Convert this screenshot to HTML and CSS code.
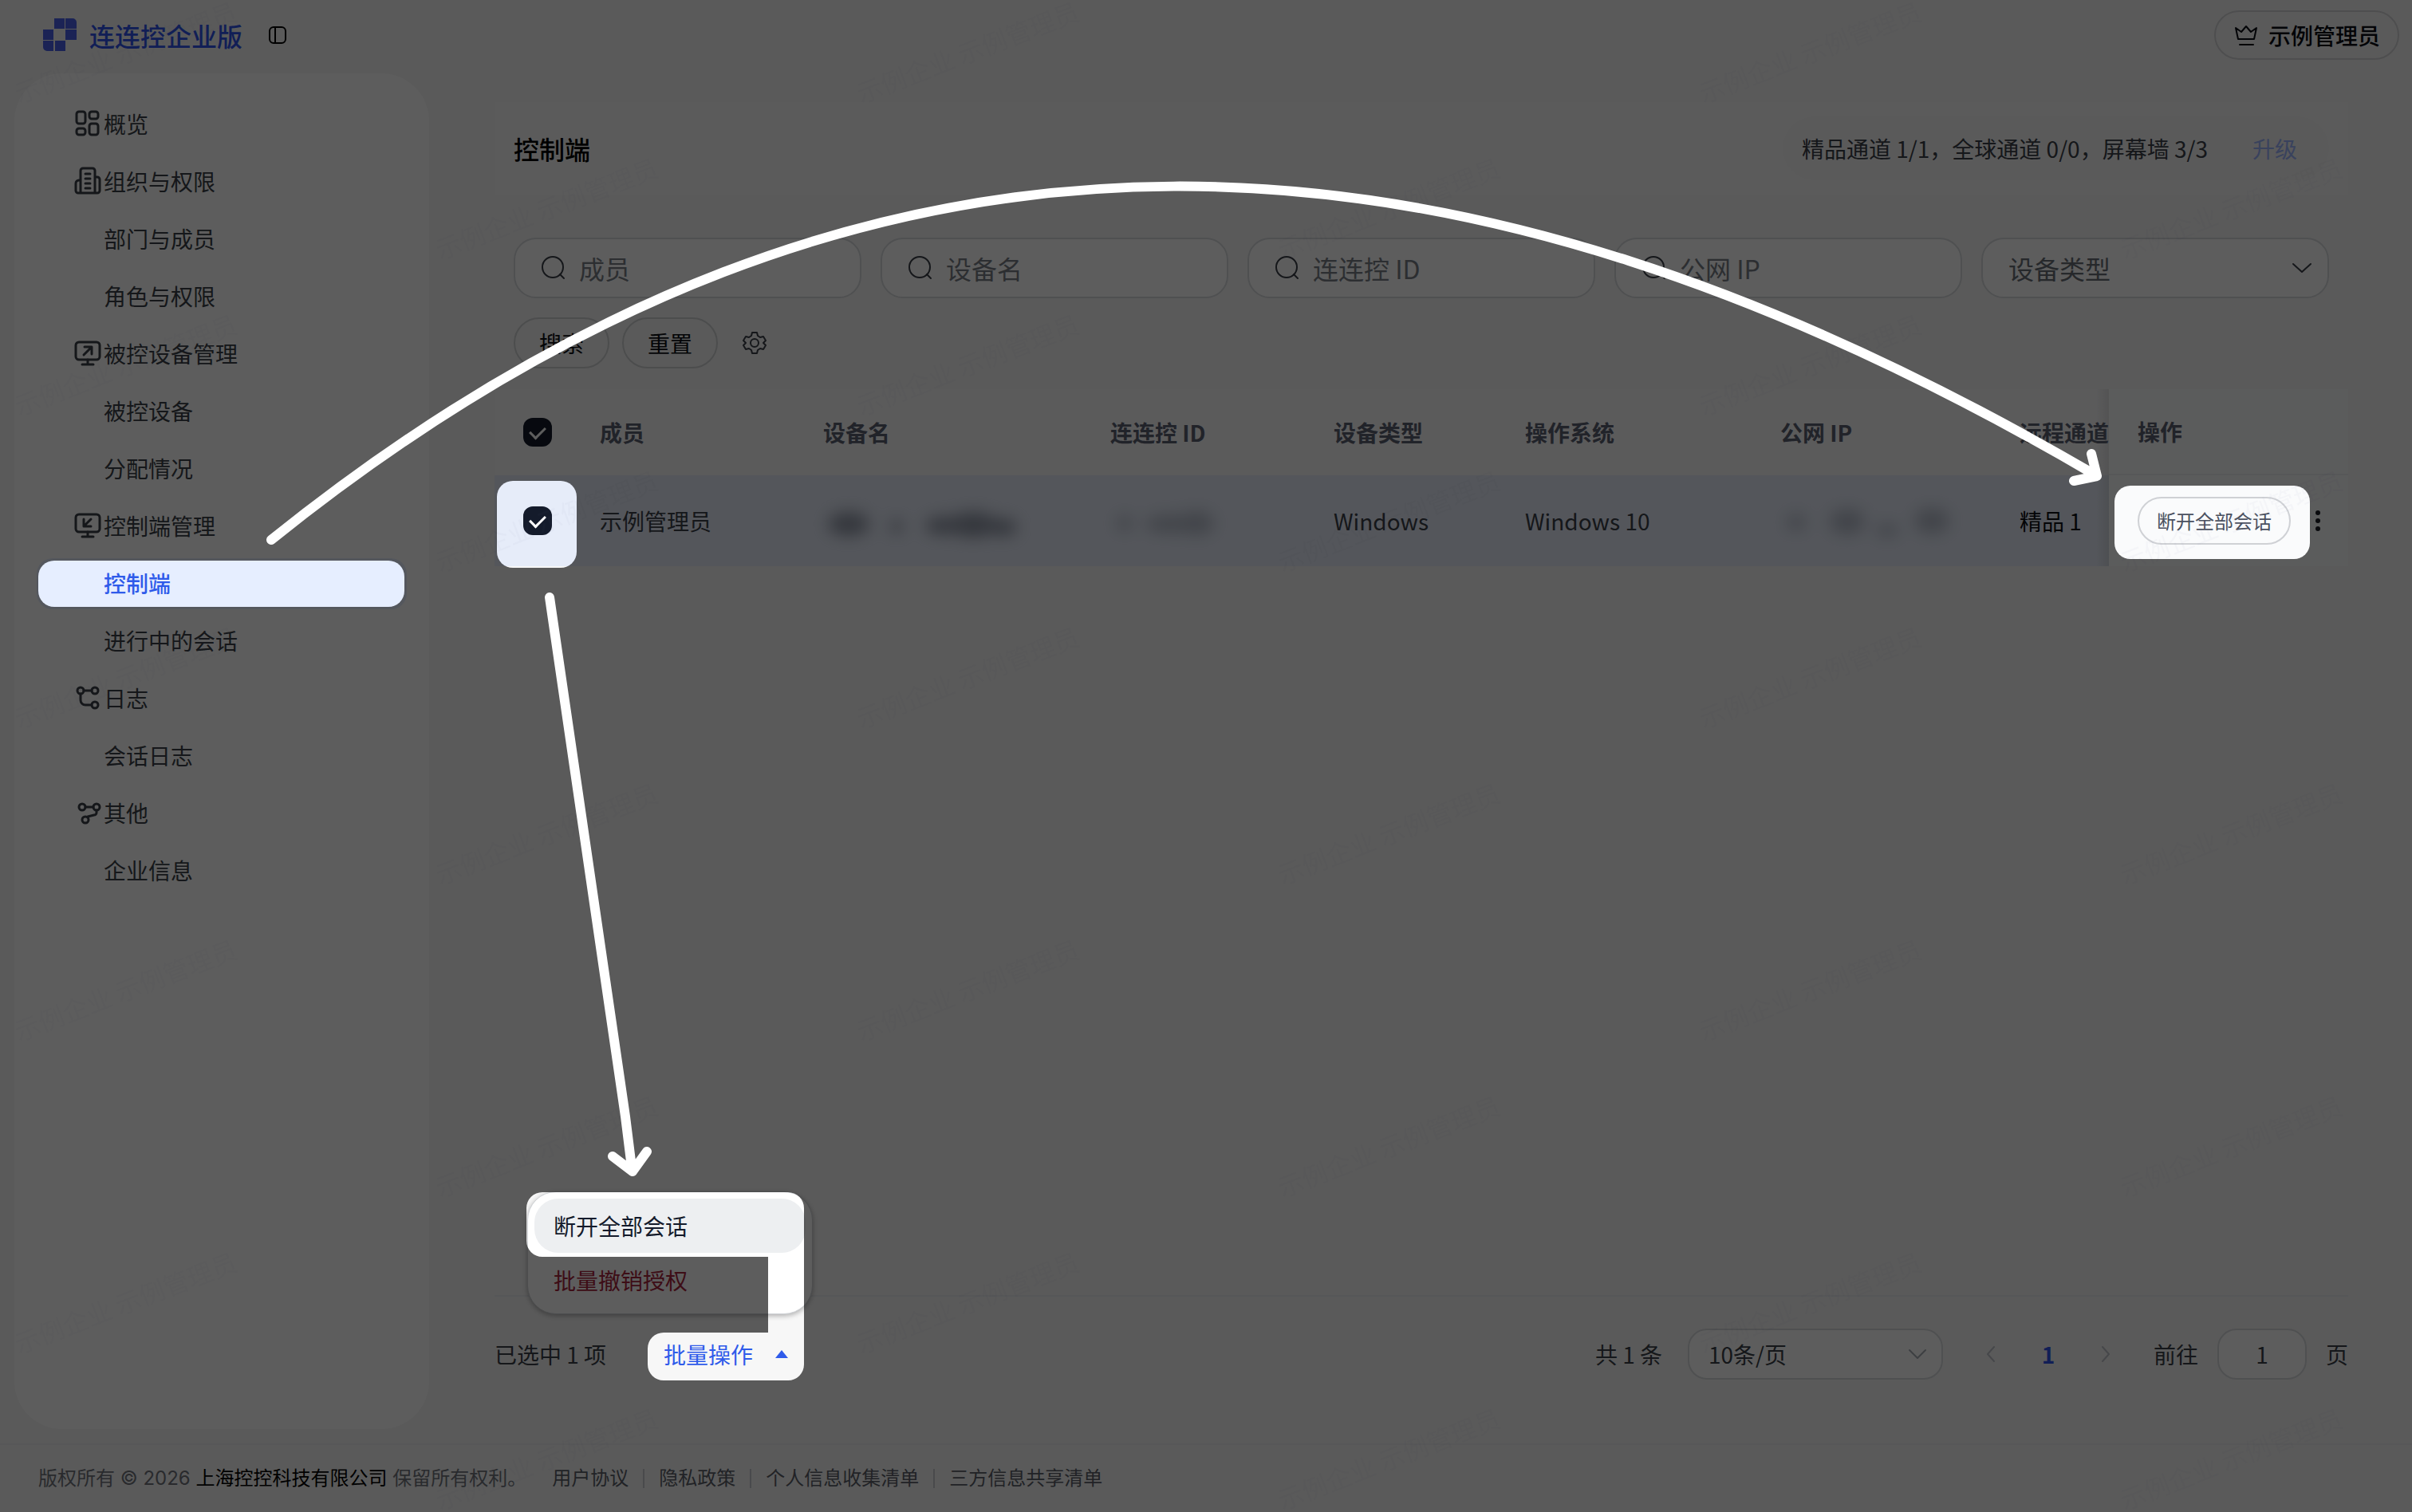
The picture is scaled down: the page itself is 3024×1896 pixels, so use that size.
FILE: index.html
```html
<!DOCTYPE html>
<html lang="zh-CN">
<head>
<meta charset="utf-8">
<meta name="viewport" content="width=device-width, initial-scale=1">
<title>控制端 - 连连控企业版</title>
<link rel="stylesheet" href="styles.css">
</head>
<body>
<header class="topbar">
  <a class="brand" href="#">
    <svg class="brand-logo" viewBox="0 0 42 42" aria-hidden="true"><path d="M14 0h13v13H14zM28 0h9a5 5 0 0 1 5 5v8H28zM0 14h13v13H0zM28 14h14v13H28zM0 28h13v13H5a5 5 0 0 1-5-5zM15 28h13v13H15z"/></svg>
    <span>连连控企业版</span>
  </a>
  <button class="icon-button" aria-label="折叠侧边栏">
    <svg width="24" height="24" viewBox="0 0 24 24"><rect x="2" y="2" width="20" height="20" rx="5"/><path d="M9 2v20"/></svg>
  </button>
  <button class="account">
    <svg width="32" height="32" viewBox="0 0 32 32" aria-hidden="true"><path d="M6 21 3 7l7 5 6-7 6 7 7-5-3 14zM8 28h17"/></svg>
    <span>示例管理员</span>
  </button>
</header>

<div class="content">
  <nav class="sidebar">
    <a class="nav-item" href="#"><svg viewBox="0 0 36 36"><rect x="4" y="3" width="11" height="15" rx="3"/><rect x="20" y="3" width="11" height="9" rx="3"/><rect x="4" y="24" width="11" height="8" rx="3"/><rect x="20" y="18" width="11" height="14" rx="3"/></svg>概览</a>
    <a class="nav-item" href="#"><svg viewBox="0 0 36 36"><path d="M9 33V5a3 3 0 0 1 3-3h12a3 3 0 0 1 3 3v28M9 17H7a4 4 0 0 0-4 4v9a3 3 0 0 0 3 3h24a3 3 0 0 0 3-3V16a3 3 0 0 0-3-3h-3M15 9h6M15 15h6M15 21h6M15 27h6"/></svg>组织与权限</a>
    <a class="nav-item nav-sub" href="#">部门与成员</a>
    <a class="nav-item nav-sub" href="#">角色与权限</a>
    <a class="nav-item" href="#"><svg viewBox="0 0 36 36"><rect x="3" y="4" width="30" height="22" rx="4"/><path d="M18 26v6M11 32h14M13 20l9-9M14 10h9v9"/></svg>被控设备管理</a>
    <a class="nav-item nav-sub" href="#">被控设备</a>
    <a class="nav-item nav-sub" href="#">分配情况</a>
    <a class="nav-item" href="#"><svg viewBox="0 0 36 36"><rect x="3" y="4" width="30" height="22" rx="4"/><path d="M18 26v6M11 32h14M22 10l-9 9M13 10v9h9"/></svg>控制端管理</a>
    <a class="nav-item nav-sub active" href="#" aria-current="page">控制端</a>
    <a class="nav-item nav-sub" href="#">进行中的会话</a>
    <a class="nav-item" href="#"><svg viewBox="0 0 36 36"><circle cx="9" cy="9" r="4"/><circle cx="27" cy="9" r="4"/><circle cx="27" cy="27" r="4"/><path d="M13 9h10M9 13v8a6 6 0 0 0 6 6h8"/></svg>日志</a>
    <a class="nav-item nav-sub" href="#">会话日志</a>
    <a class="nav-item" href="#"><svg viewBox="0 0 36 36"><circle cx="11" cy="11" r="4"/><circle cx="29" cy="11" r="4"/><circle cx="15" cy="27" r="4"/><path d="M15 11h10M29 15v3a3 3 0 0 1-3 3l-8 2"/></svg>其他</a>
    <a class="nav-item nav-sub" href="#">企业信息</a>
  </nav>

  <main class="main">
    <section class="title-bar">
      <h1>控制端</h1>
      <div class="quota"><span>精品通道 1/1，全球通道 0/0，屏幕墙 3/3</span><a href="#">升级</a></div>
    </section>

    <form class="filters">
      <div class="fields">
        <label class="field"><svg viewBox="0 0 32 32" aria-hidden="true"><circle cx="15" cy="15" r="13"/><path d="m24 24 5 5"/></svg><input type="text" placeholder="成员" aria-label="成员"></label>
        <label class="field"><svg viewBox="0 0 32 32" aria-hidden="true"><circle cx="15" cy="15" r="13"/><path d="m24 24 5 5"/></svg><input type="text" placeholder="设备名" aria-label="设备名"></label>
        <label class="field"><svg viewBox="0 0 32 32" aria-hidden="true"><circle cx="15" cy="15" r="13"/><path d="m24 24 5 5"/></svg><input type="text" placeholder="连连控 ID" aria-label="连连控 ID"></label>
        <label class="field"><svg viewBox="0 0 32 32" aria-hidden="true"><circle cx="15" cy="15" r="13"/><path d="m24 24 5 5"/></svg><input type="text" placeholder="公网 IP" aria-label="公网 IP"></label>
        <label class="field"><select aria-label="设备类型"><option>设备类型</option></select><svg viewBox="0 0 32 32" aria-hidden="true"><path d="m5 11 11 10 11-10"/></svg></label>
      </div>
      <div class="actions">
        <button type="button" class="pill">搜索</button>
        <button type="button" class="pill">重置</button>
        <button type="button" class="icon-button gear" aria-label="设置">
          <svg width="32" height="32" viewBox="0 0 32 32"><path d="M13 3h6l1 4 3 2 4-1 3 5-3 3 3 3-3 5-4-1-3 2-1 4h-6l-1-4-3-2-4 1-3-5 3-3-3-3 3-5 4 1 3-2z"/><circle cx="16" cy="16" r="5"/></svg>
        </button>
      </div>
    </form>

    <table class="devices">
      <colgroup><col class="c-check"><col class="c-member"><col><col class="c-id"><col class="c-type"><col class="c-os"><col class="c-ip"><col class="c-remote"><col class="c-ops"></colgroup>
      <thead>
        <tr><th><input type="checkbox" checked aria-label="全选"></th><th>成员</th><th>设备名</th><th>连连控 ID</th><th>设备类型</th><th>操作系统</th><th>公网 IP</th><th class="remote">远程通道</th><th class="ops">操作</th></tr>
      </thead>
      <tbody>
        <tr>
          <td><input type="checkbox" checked aria-label="选择 示例管理员"></td>
          <td>示例管理员</td>
          <td><svg class="redacted" width="260" height="60" viewBox="0 0 260 60" aria-hidden="true"><ellipse cx="32" cy="34" rx="26" ry="15"/><ellipse cx="92" cy="37" rx="8" ry="8"/><ellipse cx="150" cy="36" rx="22" ry="11"/><ellipse cx="188" cy="35" rx="30" ry="16"/><ellipse cx="225" cy="38" rx="18" ry="11"/></svg></td>
          <td><svg class="redacted light" width="160" height="60" viewBox="0 0 160 60" aria-hidden="true"><ellipse cx="18" cy="33" rx="10" ry="10"/><ellipse cx="75" cy="34" rx="32" ry="11"/><ellipse cx="108" cy="33" rx="22" ry="15"/></svg></td>
          <td>Windows</td>
          <td>Windows 10</td>
          <td><svg class="redacted light" width="240" height="60" viewBox="0 0 240 60" aria-hidden="true"><ellipse cx="20" cy="32" rx="12" ry="10"/><ellipse cx="84" cy="31" rx="22" ry="16"/><ellipse cx="134" cy="42" rx="14" ry="8"/><ellipse cx="190" cy="30" rx="22" ry="16"/></svg></td>
          <td class="remote strong">精品 1</td>
          <td class="ops"><div class="ops-row"><button class="end-all">断开全部会话</button><button class="more" aria-label="更多"><svg width="8" height="32" viewBox="0 0 8 32"><circle cx="4" cy="6" r="3"/><circle cx="4" cy="16" r="3"/><circle cx="4" cy="26" r="3"/></svg></button></div></td>
        </tr>
      </tbody>
    </table>

    <section class="pager">
      <span>已选中 1 项</span>
      <div class="bulk">
        <button class="bulk-toggle">批量操作<svg width="16" height="10" viewBox="0 0 16 10" aria-hidden="true"><path d="M8 0l8 10H0z"/></svg></button>
        <div class="menu">
          <button class="menu-item hover">断开全部会话</button>
          <button class="menu-item danger">批量撤销授权</button>
        </div>
      </div>
      <div class="pages">
        <span>共 1 条</span>
        <label class="page-size"><select aria-label="每页条数"><option>10条/页</option></select><svg viewBox="0 0 32 32" aria-hidden="true"><path d="m6 11 10 10 10-10"/></svg></label>
        <div class="steps">
          <button aria-label="上一页"><svg width="12" height="20" viewBox="0 0 12 20"><path d="M10 1 2 10l8 9"/></svg></button>
          <button class="current">1</button>
          <button aria-label="下一页"><svg width="12" height="20" viewBox="0 0 12 20"><path d="m2 1 8 9-8 9"/></svg></button>
        </div>
        <label class="goto"><span>前往</span><input type="text" value="1"><span>页</span></label>
      </div>
    </section>
  </main>
</div>

<footer class="footer">
  <p>版权所有 © 2026 <a href="#">上海控控科技有限公司</a> 保留所有权利。</p>
  <ul>
    <li><a href="#">用户协议</a></li>
    <li><a href="#">隐私政策</a></li>
    <li><a href="#">个人信息收集清单</a></li>
    <li><a href="#">三方信息共享清单</a></li>
  </ul>
</footer>

<svg class="guide" aria-hidden="true">
  <defs>
    <pattern id="watermark" width="1056" height="392" patternUnits="userSpaceOnUse">
      <text class="mark" transform="translate(24 130) rotate(-21)">示例企业 示例管理员</text>
      <text class="mark" transform="translate(552 326) rotate(-21)">示例企业 示例管理员</text>
    </pattern>
    <mask id="spotlight">
      <rect class="keep" width="100%" height="100%"/>
      <g class="cut">
        <rect x="48" y="703" width="459" height="58" rx="20"/>
        <rect x="623" y="603" width="100" height="109" rx="20"/>
        <rect x="2651" y="609" width="245" height="92" rx="20"/>
        <path d="M680 1495H988a20 20 0 0 1 20 20V1711a20 20 0 0 1-20 20H832a20 20 0 0 1-20-20V1691a20 20 0 0 1 20-20H963V1576H680a20 20 0 0 1-20-20V1515a20 20 0 0 1 20-20z"/>
      </g>
    </mask>
  </defs>
  <rect class="pattern" width="100%" height="100%" fill="url(#watermark)"/>
  <rect class="shade" width="100%" height="100%" mask="url(#spotlight)"/>
  <path class="arrow" d="M340 677C1100 66 1835 133 2626 595M2622 569 2629 597 2600 603"/>
  <path class="arrow" d="M689 749 784 1400 792 1464M768 1450 793 1469 811 1444"/>
</svg>
</body>
</html>
```
FILE: styles.css
```css
* { box-sizing: border-box; }

body {
  position: relative;
  display: flex;
  flex-direction: column;
  min-height: 100vh;
  margin: 0;
  background: #f7f7f7;
  color: #3a3f48;
  font: 28px/40px "Noto Sans CJK SC", "Noto Sans", sans-serif;
}

a { color: inherit; text-decoration: none; }
button, input, select { margin: 0; font: inherit; color: inherit; }
button { padding: 0; border: 0; background: none; cursor: pointer; }
svg { flex: none; fill: none; stroke: currentColor; stroke-width: 2; stroke-linecap: round; stroke-linejoin: round; }

/* Top bar */
.topbar { display: flex; align-items: center; height: 88px; padding: 0 16px 0 54px; }
.brand { display: flex; align-items: center; gap: 16px; color: #2f54eb; font-size: 32px; font-weight: 500; }
.brand-logo { width: 42px; height: 42px; fill: #4a62e8; stroke: none; }
.icon-button { display: flex; margin-left: 32px; color: #000; }
.account {
  display: flex; align-items: center; justify-content: center; gap: 12px;
  width: 232px; height: 62px; margin-left: auto;
  border: 2px solid #d5d6d8; border-radius: 31px;
  color: #0a0d14; font-weight: 500;
}

/* Sidebar */
.content { display: flex; flex: 1; gap: 82px; padding: 4px 80px 0 18px; }
.sidebar {
  display: flex; flex: none; flex-direction: column; gap: 8px;
  width: 520px; padding: 32px 28px; border-radius: 60px; background: #fff;
}
.nav-item {
  display: flex; align-items: center; gap: 2px;
  height: 64px; padding: 0 0 2px 46px; border-radius: 20px;
}
.nav-item svg { width: 36px; height: 36px; stroke-width: 3; }
.nav-item.nav-sub { padding-left: 84px; }
.nav-item.active { background: #e6eeff; color: #2f5bea; font-weight: 500; }

/* Main column */
.main { display: flex; flex: 1; flex-direction: column; min-width: 0; padding-top: 36px; }
.title-bar {
  display: flex; align-items: center; justify-content: space-between;
  height: 116px; padding: 0 24px; background: #fafafa;
}
h1 { margin: 0; color: #000; font-size: 32px; font-weight: 500; }
.quota { display: flex; gap: 56px; padding: 20px 40px 20px 24px; border-radius: 40px; background: #f6f6f6; }
.quota a { color: #9db4ff; }

.filters { padding: 54px 24px 26px; }
.fields { display: grid; grid-template-columns: repeat(5, 1fr); gap: 24px; }
.field {
  display: flex; align-items: center; gap: 16px;
  height: 76px; padding: 0 32px; border: 2px solid #d8dbde; border-radius: 28px;
  background: #fff; font-size: 32px;
}
.field svg { width: 32px; height: 32px; }
.field input, .field select { flex: 1; width: 100%; min-width: 0; padding: 0; border: 0; outline: 0; background: none; appearance: none; }
.field input::placeholder { color: #7a7f87; opacity: 1; }
.field select { color: #6a6f77; }
.field:last-child svg { margin-right: -16px; }
.actions { display: flex; align-items: center; gap: 16px; margin-top: 24px; }
.pill { width: 120px; height: 64px; border: 2px solid #d0d2d4; border-radius: 32px; color: #0d0f14; }
.gear { margin-left: 14px; color: #3a3f48; }

/* Device table */
.devices { width: 100%; border-spacing: 0; table-layout: fixed; }
.devices th, .devices td { padding: 0 0 0 20px; text-align: left; white-space: nowrap; }
.devices th { height: 108px; background: #f9f9fa; color: #5a6072; font-weight: 700; }
.devices td { height: 114px; background: #e6ecf9; }
.devices th:first-child, .devices td:first-child { padding-left: 36px; }
.c-check { width: 112px; }
.c-member, .c-id { width: 280px; }
.c-type { width: 240px; }
.c-os { width: 320px; }
.c-ip { width: 300px; }
.c-remote { width: 132px; }
.c-ops { width: 300px; }
.devices .remote { overflow: hidden; }
.devices th.remote { background: linear-gradient(to left, #e4e4e6, #f9f9fa 16px); }
.devices td.remote { background: linear-gradient(to left, #d4d9e2, #e6ecf9 16px); }
.devices td.strong { color: #0d0f14; }
.devices .ops { padding-left: 36px; background: #fafbfc; }
.devices th.ops { border-bottom: 2px solid #ebedf0; }
.redacted { display: block; fill: #6b7283; stroke: none; filter: blur(10px); opacity: .7; }
.redacted.light { opacity: .4; }

input[type="checkbox"] {
  display: grid; place-items: center; width: 36px; height: 36px;
  border-radius: 12px; background: #141b2b; appearance: none;
}
input[type="checkbox"]:checked::after {
  content: ""; width: 9px; height: 16px; margin-top: -4px;
  border: solid #fff; border-width: 0 3px 3px 0; transform: rotate(45deg);
}

.ops-row { display: flex; align-items: center; gap: 30px; }
.end-all {
  width: 192px; height: 60px; border: 2px solid #cfd1d5; border-radius: 30px;
  color: #4b5160; font-size: 24px;
}
.more { display: flex; }
.more svg { fill: #1a1d26; stroke: none; }

/* Bulk actions and pagination */
.pager {
  display: flex; align-items: center; margin-top: auto;
  padding: 40px 0 62px; border-top: 2px solid #eceef0;
}
.bulk { position: relative; margin-left: 52px; }
.bulk-toggle {
  display: flex; align-items: center; justify-content: space-between;
  width: 196px; height: 64px; padding: 0 20px; color: #2f5bea;
}
.bulk-toggle svg { fill: currentColor; stroke: none; }
.menu {
  position: absolute; right: -11px; bottom: 82px; width: 358px; padding: 8px;
  border: 1px solid #cfd2d6; border-radius: 36px; background: #fff;
  box-shadow: 0 2px 6px rgba(0, 0, 0, .3);
}
.menu-item { display: block; width: 100%; height: 68px; padding: 0 24px; border-radius: 30px; text-align: left; }
.menu-item.hover { background: #edeff1; color: #141b2b; }
.menu-item.danger { color: #a8243c; }

.pages { display: flex; align-items: center; margin-left: auto; }
.page-size {
  display: flex; align-items: center; width: 320px; height: 64px; margin: 0 40px 0 32px;
  padding: 0 14px 0 24px; border: 2px solid #d8dbde; border-radius: 24px; background: #fff;
}
.page-size select { flex: 1; padding: 0; border: 0; background: none; appearance: none; }
.page-size svg { width: 32px; height: 32px; color: #a8adb5; }
.steps { display: flex; gap: 32px; margin-right: 40px; }
.steps button { display: flex; align-items: center; justify-content: center; width: 40px; height: 64px; color: #c0c4ca; }
.steps .current { color: #2f54eb; font-weight: 700; }
.goto { display: flex; align-items: center; gap: 24px; }
.goto input { width: 112px; height: 64px; padding: 0; border: 2px solid #d8dbde; border-radius: 24px; background: #fff; text-align: center; }

/* Footer */
.footer {
  display: flex; align-items: center; gap: 32px;
  height: 86px; margin-top: 18px; padding: 0 48px; border-top: 2px solid #eeeff0;
  color: #70757d; font-size: 24px; font-family: Inter, "Noto Sans CJK SC", sans-serif;
}
.footer p { margin: 0; }
.footer p a { color: #000; }
.footer ul { display: flex; margin: 0; padding: 0; list-style: none; color: #5a5f68; }
.footer li { display: flex; align-items: center; }
.footer li + li::before { content: ""; width: 2px; height: 24px; margin: 0 18px; background: #c9ccd0; }

/* Guide layer: watermark, shade with cut-outs, arrows */
.guide { position: absolute; inset: 0; width: 100%; height: 100%; pointer-events: none; }
.mark { fill: #5a6f9a; fill-opacity: .04; stroke: none; font-size: 32px; }
.pattern { stroke: none; }
.keep { fill: #fff; stroke: none; }
.cut { fill: #000; stroke: none; }
.shade { fill: #000; fill-opacity: .635; stroke: none; }
.arrow { stroke: #fff; stroke-width: 12; }
```
